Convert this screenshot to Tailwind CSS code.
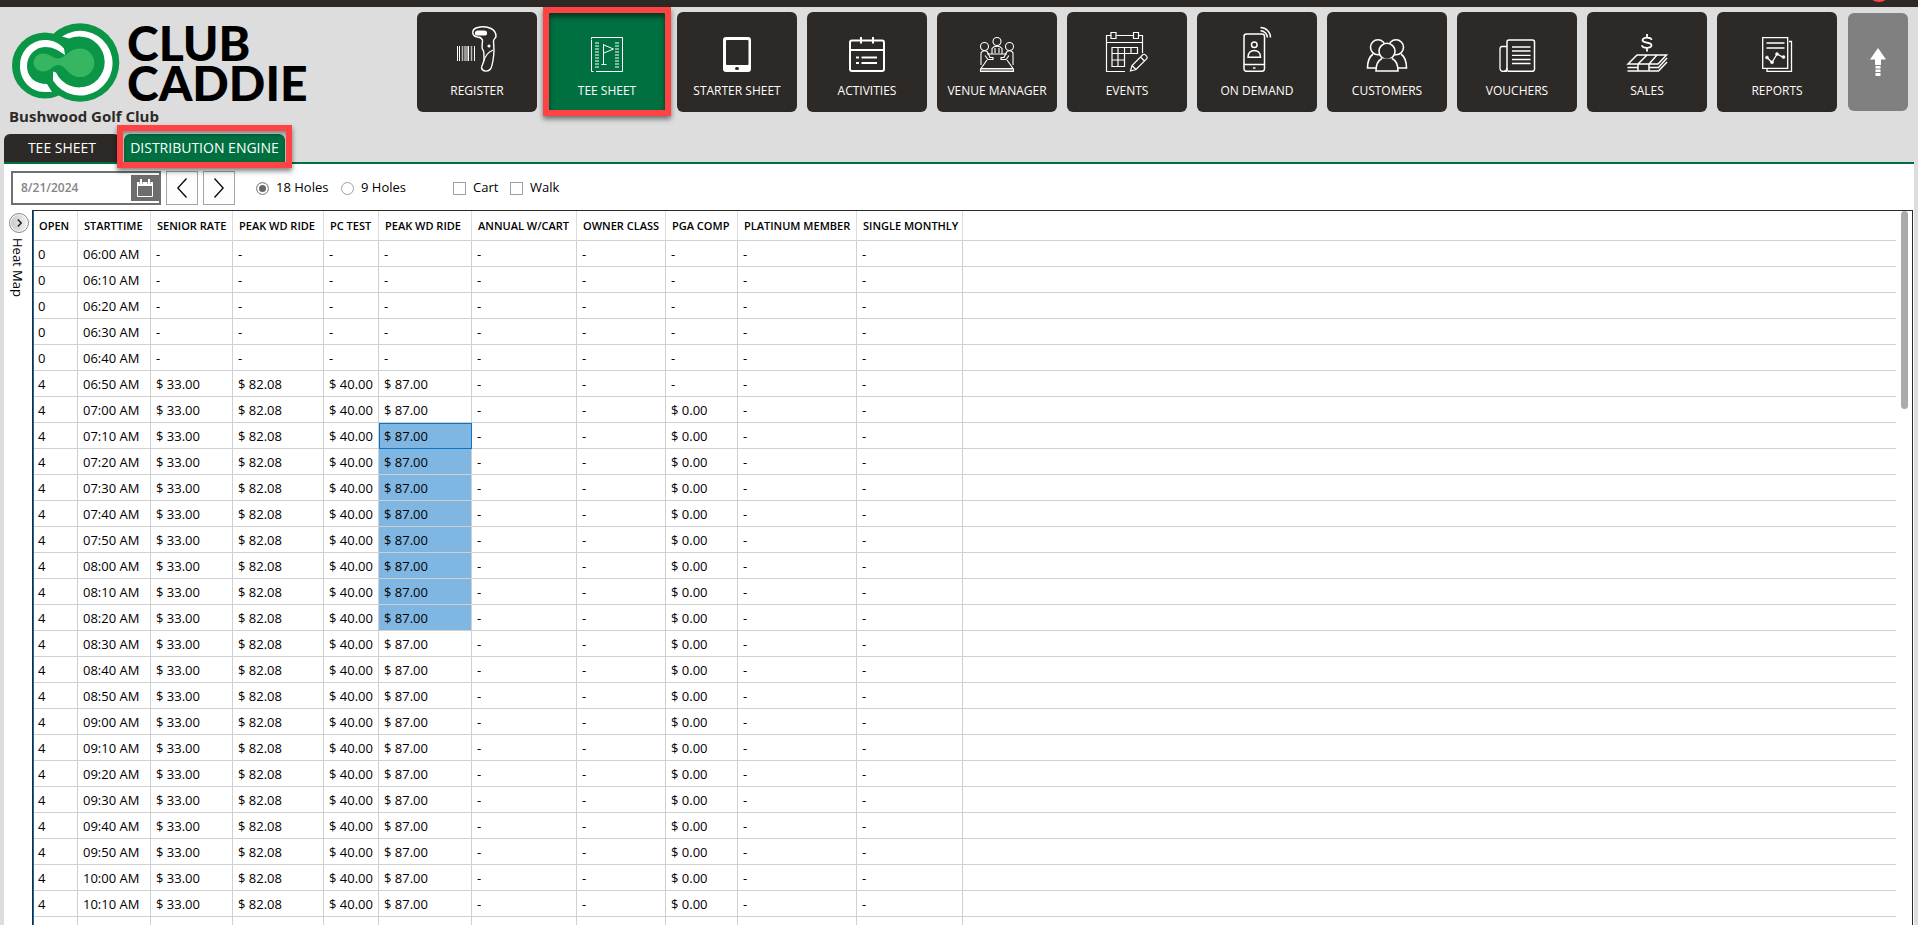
<!DOCTYPE html>
<html lang="en">
<head>
<meta charset="utf-8">
<meta name="viewport" content="width=device-width, initial-scale=1">
<title>Club Caddie - Distribution Engine</title>
<script src="https://cdn.jsdelivr.net/npm/@tailwindcss/browser@4"></script>
</head>
<body class="relative flex h-screen flex-col overflow-hidden bg-[#dddddd] font-['Open_Sans','Noto_Sans',sans-serif] text-black">

<div class="h-[7px] shrink-0 bg-[#2d2926]"></div>
<div class="absolute -top-[22px] right-[27px] size-6 rounded-full bg-[#ff4343]" aria-hidden="true"></div>

<header class="flex shrink-0 items-start justify-between pr-[10px]">
  <div class="flex flex-col pl-[9px]">
    <div class="flex h-24 items-start pt-4 pl-[3px]">
      <svg class="h-[80px] w-[108px] shrink-0" viewBox="12 23 108 80" fill="none" role="img" aria-label="Club Caddie logo">
        <circle cx="45" cy="65.500" r="33" fill="#0b9547"/>
        <circle cx="80" cy="62.500" r="39.300" fill="#0b9547"/>
        <path d="M42.500 53.500c8 0 10 5 16 5 7 0 10-10 21.500-10a14.300 14.300 0 0 1 0 28.600c-11.500 0-14.500-12.100-21.500-12.100-6 0-8 6.500-16 6.500a9 9 0 0 1 0-18z" fill="#37b661"/>
        <path d="M65 55l-1-6.500C59 42.500 52 40 44.500 40a25 25 0 0 0-24.500 26.500c0 13 10 25.500 24.500 25.500h7.500l-5-8c-12 0-20-7-20-18 0-10 8-19 18-19 8 0 13 3 20 8z" fill="#fff"/>
        <path d="M62 36.500a32.300 32.300 0 1 1-9 44v-9l3 1a25.500 25.500 0 1 0 13-34z" fill="#fff"/>
      </svg>
      <div class="pl-[7px] font-['Lato',sans-serif] text-[48px] leading-[40px] font-black">
        <div>CLUB</div><div>CADDIE</div>
      </div>
    </div>
    <div class="mt-[3px] text-[15px] leading-5 font-bold text-[#2d2926]">Bushwood Golf Club</div>
  </div>

  <nav class="flex gap-[10px] pt-[5px]" aria-label="Main">
    <button class="flex h-[100px] w-[120px] flex-col items-center rounded-md bg-[#2d2926] pt-3 text-[12px] leading-4 font-medium text-white">
      <svg class="mb-[11px] h-12 w-[60px] shrink-0" viewBox="0 0 60 48" fill="none" stroke="#fff" stroke-width="1.200">
        <path d="M10.500 22v15M12.500 22v15M21.500 22v15M27.500 22v15" stroke-width="1"/>
        <path d="M15.500 22v15M18 22v15M20 22v15M24.500 22v15" stroke="#bbb" stroke-width="1.500"/>
        <path d="M29 4c5-1.500 11-1.500 15 .5 3 1.500 5 5 5 8-.5 2-2.500 2.500-2.500 4.500l.5 9c0 5-1.500 16-3.500 19-2 3-8 3-9-1 0-3 3-5 2.500-10-.3-4 .5-6-1-8-2-2-.5-4-.5-10-1-2-3-3-5-3-6-1-6-7-1.500-9z" stroke-width="1.400"/>
        <rect x="28.500" y="7" width="11" height="4" rx="2" fill="#fff"/>
        <path d="M37 37c1-6 5-9 9-11"/>
        <circle cx="42" cy="22" r="1" fill="#fff"/>
      </svg>
      REGISTER
    </button>

    <div class="relative">
      <button class="flex h-[100px] w-[120px] flex-col items-center rounded-md bg-[#007041] pt-3 text-[12px] leading-4 font-medium text-white" aria-current="page">
        <svg class="mb-[11px] h-12 w-[60px] shrink-0" viewBox="0 0 60 48" fill="none" stroke="#fff" stroke-width="1">
          <path d="M14.500 16v31.500h2M19 47.500h26.500v-34h-31v2"/>
          <path d="M20 18.500v25M40 18.500v25" stroke-width="4" stroke-dasharray="1 2"/>
          <path d="M26.500 20v21M24.500 40.500h5M27 21l9.500 4-9.500 4"/>
        </svg>
        TEE SHEET
      </button>
      <div class="pointer-events-none absolute -top-[5px] -right-1 -bottom-1 -left-1 border-[6px] border-[#ff4343] shadow-[0_3px_5px_rgba(0,0,0,0.5),inset_0_4px_5px_rgba(0,0,0,0.5)]"></div>
    </div>

    <button class="flex h-[100px] w-[120px] flex-col items-center rounded-md bg-[#2d2926] pt-3 text-[12px] leading-4 font-medium text-white">
      <svg class="mb-[11px] h-12 w-[60px] shrink-0" viewBox="0 0 60 48">
        <rect x="16" y="13" width="28" height="35" rx="3" fill="#fff"/>
        <rect x="19" y="16" width="22.500" height="25" rx="1" fill="#2d2926"/>
        <rect x="28" y="43" width="4" height="3" rx="1.500" fill="#2d2926"/>
      </svg>
      STARTER SHEET
    </button>

    <button class="flex h-[100px] w-[120px] flex-col items-center rounded-md bg-[#2d2926] pt-3 text-[12px] leading-4 font-medium text-white">
      <svg class="mb-[11px] h-12 w-[60px] shrink-0" viewBox="0 0 60 48" fill="none" stroke="#fff" stroke-width="2">
        <rect x="13" y="16.500" width="34" height="30.500" rx="2"/>
        <path d="M13 26h34M24 13v6.500M36 13v6.500M19 33.500h3M19 39h3M24.500 33.500h15.500M24.500 39h15.500"/>
      </svg>
      ACTIVITIES
    </button>

    <button class="flex h-[100px] w-[120px] flex-col items-center rounded-md bg-[#2d2926] pt-3 text-[12px] leading-4 font-medium text-white">
      <svg class="mb-[11px] h-12 w-[60px] shrink-0" viewBox="0 0 60 48" fill="none" stroke="#fff" stroke-width="1.100">
        <circle cx="30" cy="17.500" r="4"/><circle cx="17.500" cy="22.500" r="4"/><circle cx="42.500" cy="22.500" r="4"/>
        <path d="M25 29.500v-5c2-3 8-3 10 0v5M28 24v5M32 24v5M20 30h20"/>
        <path d="M14 41V29c1-3 6-3 7 0l2 4.500h3v2h-5l-3-4M46 41V29c-1-3-6-3-7 0l-2 4.500h-3v2h5l3-4"/>
        <path d="M20 36l-6 8.500h32L40 36M13.500 44.500v3h33v-3M14 46h32"/>
      </svg>
      VENUE MANAGER
    </button>

    <button class="flex h-[100px] w-[120px] flex-col items-center rounded-md bg-[#2d2926] pt-3 text-[12px] leading-4 font-medium text-white">
      <svg class="mb-[11px] h-12 w-[60px] shrink-0" viewBox="0 0 60 48" fill="none" stroke="#fff" stroke-width="1.200">
        <path d="M28 47.500H9.500V11.500H14M19.500 11.500H36M42 11.500h3.500V29M9.500 18.500h36"/>
        <path d="M14 8.500h5v6h-5zM36.500 8.500h5v6h-5z"/>
        <path d="M15 23.500h25.500v6H15zM15 29.500v13h12.500v-19M21 23.500v19M34 23.500v6M15 36h12.500"/>
        <path d="M33.500 47l1.500-5.500L46 30.500c1.500-1 5 2 4 4L39 45.500zM35 41.500l4 4M43.500 33l4 4"/>
      </svg>
      EVENTS
    </button>

    <button class="flex h-[100px] w-[120px] flex-col items-center rounded-md bg-[#2d2926] pt-3 text-[12px] leading-4 font-medium text-white">
      <svg class="mb-[11px] h-12 w-[60px] shrink-0" viewBox="0 0 60 48" fill="none" stroke="#fff" stroke-width="1.500">
        <rect x="17" y="10" width="20.500" height="37.300" rx="2.500"/>
        <path d="M17 40.500h20.500M26 44h2.500"/>
        <circle cx="27.300" cy="20.700" r="2.800"/>
        <path d="M21 33.200c0-9 12.500-9 12.500 0z"/>
        <path d="M33.500 3.500a10 10 0 0 1 10 10M33.500 6.700a6.800 6.800 0 0 1 6.800 6.800"/>
      </svg>
      ON DEMAND
    </button>

    <button class="flex h-[100px] w-[120px] flex-col items-center rounded-md bg-[#2d2926] pt-3 text-[12px] leading-4 font-medium text-white">
      <svg class="mb-[11px] h-12 w-[60px] shrink-0" viewBox="0 0 60 48" fill="none" stroke="#fff" stroke-width="1.600">
        <circle cx="21" cy="23.300" r="7.500"/><circle cx="39" cy="23.300" r="7.500"/>
        <path d="M16 30c-4 3-5.500 8-5.500 14H20M44 30c4 3 5.500 8 5.500 14H40"/>
        <circle cx="30" cy="27.300" r="8" fill="#2d2926"/>
        <path d="M25 34.500c-4 2-6 6-6 12.500h22c0-6.500-2-10.500-6-12.500" fill="#2d2926"/>
      </svg>
      CUSTOMERS
    </button>

    <button class="flex h-[100px] w-[120px] flex-col items-center rounded-md bg-[#2d2926] pt-3 text-[12px] leading-4 font-medium text-white">
      <svg class="mb-[11px] h-12 w-[60px] shrink-0" viewBox="0 0 60 48" fill="none" stroke="#fff" stroke-width="1.500">
        <rect x="20" y="16" width="27.500" height="31.300" rx="2"/>
        <path d="M20 22.500h-5q-2 0-2 3V44c0 4.500 6.500 4.500 7 0M25 23h18.500M25 27h18.500M25 31.300h18.500M25 35.500h18.500M25 39.500h18.500" stroke-width="1.300"/>
        <path d="M20 47.300h-3"/>
      </svg>
      VOUCHERS
    </button>

    <button class="flex h-[100px] w-[120px] flex-col items-center rounded-md bg-[#2d2926] pt-3 text-[12px] leading-4 font-medium text-white">
      <svg class="mb-[11px] h-12 w-[60px] shrink-0" viewBox="0 0 60 48" fill="none" stroke="#fff" stroke-width="1.500">
        <path d="M30 10v3.500M34.500 16c0-3-9-3.500-9 .3 0 3.200 9 1.500 9 5 0 3.700-9.500 3.200-9.500 0M30 24v3.500" stroke-width="1.800"/>
        <path d="M20 31h29.500L41 40H11zM30 31l-9 9M40 31l-8 9M50 34l-9 10M10.500 43.500h10M10.500 47h31l8.500-9M21 40v7M32 40v7M32 43.500h9"/>
      </svg>
      SALES
    </button>

    <button class="flex h-[100px] w-[120px] flex-col items-center rounded-md bg-[#2d2926] pt-3 text-[12px] leading-4 font-medium text-white">
      <svg class="mb-[11px] h-12 w-[60px] shrink-0" viewBox="0 0 60 48" fill="none" stroke="#fff" stroke-width="1.300">
        <path d="M15.700 13.600h25v30.800h-25z"/>
        <path d="M42 17.500h2.500v29.800H20V45M19.500 19h18M19.500 24h18"/>
        <path d="M20 33.500l5 5 5-8.500 6.500 3.500"/>
        <g fill="#fff" stroke-width=".5"><circle cx="20" cy="33.500" r="1.500"/><circle cx="25" cy="38.300" r="1.500"/><circle cx="30" cy="30" r="1.500"/><circle cx="36.500" cy="33" r="1.500"/></g>
      </svg>
      REPORTS
    </button>

    <button class="mt-[1px] ml-[1px] flex h-[98px] w-[60px] items-center justify-center rounded-md bg-[#808080]" aria-label="Scroll to top">
      <svg class="h-7 w-4" viewBox="0 0 16 28" fill="#fff"><path d="M8 0l8 11.500h-5V17H5v-5.500H0zM5.500 18h5v2.500h-5zM5.500 21.500h5V24h-5zM5.500 25h5v3h-5z"/></svg>
    </button>
  </nav>
</header>

<div class="mx-1 mt-2 flex shrink-0 gap-1 border-b-2 border-[#007041] text-[14px] leading-7 text-white" role="tablist">
  <button class="h-7 w-[116px] rounded-t-md bg-[#2d2926]" role="tab">TEE SHEET</button>
  <div class="relative">
    <button class="h-7 w-[161px] rounded-t-md bg-[#007041] whitespace-nowrap" role="tab" aria-selected="true">DISTRIBUTION ENGINE</button>
    <div class="pointer-events-none absolute -top-[9px] -right-[7px] -bottom-[6px] -left-[7px] border-[6px] border-[#ff4343] shadow-[0_3px_5px_rgba(0,0,0,0.5),inset_0_3px_4px_rgba(0,0,0,0.4)]"></div>
  </div>
</div>

<main class="mx-1 flex min-h-0 flex-1 flex-col bg-white">
  <div class="flex shrink-0 items-center pt-[7px] pb-[5px] pl-[7px] text-[13px]">
    <div class="flex h-[34px] w-[150px] items-center justify-between border-2 border-[#707070]">
      <input class="w-24 pl-2 text-[12px] font-semibold text-[#858585] outline-none" type="text" value="8/21/2024" aria-label="Date">
      <button class="flex h-[26px] w-7 items-center justify-center bg-[#6d6d6d]" aria-label="Open calendar">
        <svg class="h-[18px] w-4" viewBox="0 0 16 18" fill="none" stroke="#fff"><path d="M.5 3.500h15v14H.5z"/><path d="M0 5h16" stroke-width="4"/><path d="M4 0v5M8 0v3M12 0v5" stroke="#6d6d6d" stroke-width="3"/><path d="M4 0v5M12 0v5" stroke-width="2"/></svg>
      </button>
    </div>
    <button class="ml-[5px] flex h-[34px] w-8 items-center justify-center border border-[#a5a5a5] bg-[#fdfdfd]" aria-label="Previous day">
      <svg class="h-5 w-[10px]" viewBox="0 0 10 20" fill="none" stroke="#000" stroke-width="1.300"><path d="M9.500.5L.8 10l8.700 9.500"/></svg>
    </button>
    <button class="ml-[5px] flex h-[34px] w-8 items-center justify-center border border-[#a5a5a5] bg-[#fdfdfd]" aria-label="Next day">
      <svg class="h-5 w-[10px]" viewBox="0 0 10 20" fill="none" stroke="#000" stroke-width="1.300"><path d="M.5.500L9.200 10 .5 19.500"/></svg>
    </button>
    <label class="ml-[21px] flex w-[85px] items-center gap-[7px] whitespace-nowrap">
      <input class="size-[13px] appearance-none rounded-full border border-[#8e8e8e] bg-white checked:bg-[#666] checked:shadow-[inset_0_0_0_2px_#fff]" type="radio" name="holes" checked>18 Holes
    </label>
    <label class="flex w-[112px] items-center gap-[7px] whitespace-nowrap">
      <input class="size-[13px] appearance-none rounded-full border border-[#a0a0a0] bg-white checked:bg-[#666]" type="radio" name="holes">9 Holes
    </label>
    <label class="flex w-[57px] items-center gap-[7px]">
      <input class="size-[13px] appearance-none border border-[#a0a0a0] bg-white" type="checkbox">Cart
    </label>
    <label class="flex items-center gap-[7px]">
      <input class="size-[13px] appearance-none border border-[#a0a0a0] bg-white" type="checkbox">Walk
    </label>
  </div>

  <div class="flex min-h-0 flex-1">
    <aside class="flex w-7 shrink-0 flex-col items-center pt-[3px]">
      <button class="ml-[2px] flex size-5 items-center justify-center rounded-full border border-[#8a8a8a] bg-linear-to-r from-[#c8c8c8] to-[#f2f2f2] shadow-[inset_0_0_0_1px_#fff]" aria-label="Expand heat map">
        <svg class="h-2 w-[5px]" viewBox="0 0 5 8" fill="none" stroke="#222" stroke-width="1.500"><path d="M.8.500L4.200 4 .8 7.500"/></svg>
      </button>
      <div class="mt-[5px] text-[13px] leading-4 [writing-mode:vertical-rl]">Heat Map</div>
    </aside>

    <div class="mr-[1px] flex min-w-0 flex-1 items-start overflow-hidden border-t border-r border-l border-[#2d2926]">
      <table class="min-w-0 flex-1 table-fixed border-separate border-spacing-0 self-start border-l border-[#0b6cb5] text-left text-[13px] whitespace-nowrap">
        <colgroup>
          <col class="w-11"><col class="w-[73px]"><col class="w-[82px]"><col class="w-[91px]"><col class="w-[55px]"><col class="w-[93px]"><col class="w-[105px]"><col class="w-[89px]"><col class="w-[72px]"><col class="w-[119px]"><col class="w-[106px]"><col>
        </colgroup>
        <thead><tr id="head" class="h-[30px] text-[11px] leading-4"></tr></thead>
        <tbody id="rows"></tbody>
      </table>
      <div class="w-4 shrink-0 pl-[5px]" aria-hidden="true">
        <div class="h-[198px] w-[7px] rounded-full bg-[#acaaab]"></div>
      </div>
    </div>
  </div>
</main>

<script>
const titles = ['OPEN', 'STARTTIME', 'SENIOR RATE', 'PEAK WD RIDE', 'PC TEST', 'PEAK WD RIDE', 'ANNUAL W/CART', 'OWNER CLASS', 'PGA COMP', 'PLATINUM MEMBER', 'SINGLE MONTHLY', ''];
document.getElementById('head').innerHTML = titles.map((t, i) =>
  `<th scope="col" class="border-b border-[#d0d0d0] p-0 font-semibold ${i < 11 ? 'border-r border-r-[#dcdcdc]' : ''} ${i ? 'pl-[6px]' : 'pl-[5px]'}">${t}</th>`).join('');

// Ten-minute tee times from 6:00; the first five are closed.
let html = '';
for (let r = 0; r < 27; r++) {
  const minutes = 360 + r * 10;
  const time = String(Math.floor(minutes / 60)).padStart(2, '0') + ':' + String(minutes % 60).padStart(2, '0') + ' AM';
  const open = r >= 5;
  const cells = [open ? 4 : 0, time, open ? '$ 33.00' : '-', open ? '$ 82.08' : '-', open ? '$ 40.00' : '-', open ? '$ 87.00' : '-', '-', '-', r >= 6 ? '$ 0.00' : '-', '-', '-', ''];
  html += '<tr class="h-[26px]">' + cells.map((c, i) => {
    const picked = i === 5 && r >= 7 && r <= 14;
    return `<td class="border-b border-[#d0d0d0] p-0 leading-5 ${i < 11 ? 'border-r' : ''} ${i ? 'pl-[5px]' : 'pl-1'} ${picked ? 'bg-[#80b6e2]' : ''} ${picked && r === 7 ? 'outline outline-1 -outline-offset-1 outline-[#0b72c4]' : ''}">${c}</td>`;
  }).join('') + '</tr>';
}
document.getElementById('rows').innerHTML = html;
</script>
</body>
</html>
